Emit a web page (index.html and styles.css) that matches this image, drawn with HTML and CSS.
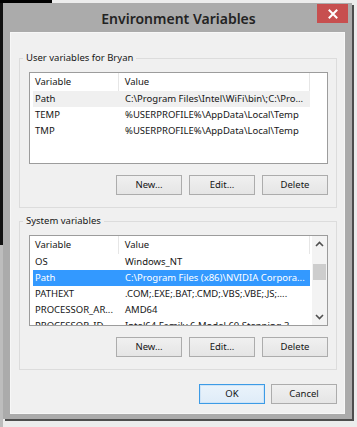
FILE: index.html
```html
<!DOCTYPE html>
<html>
<head>
<meta charset="utf-8">
<link rel="stylesheet" href="styles.css">
</head>
<body>
<div class="window">
  <div class="titlebar">
    <span class="title">Environment Variables</span>
    <div class="close"><svg width="10" height="10" viewBox="0 0 10 10"><path d="M1.5 1.5 L8.5 8.5 M8.5 1.5 L1.5 8.5" stroke="#fff" stroke-width="2" stroke-linecap="square"/></svg></div>
  </div>
  <div class="client">
    <fieldset class="group">
      <legend>User variables for Bryan</legend>
      <div class="list">
        <div class="cols">
          <div class="head">
            <div class="hc c1">Variable</div>
            <div class="hc c2">Value</div>
          </div>
          <div class="row hover"><div class="cell c1">Path</div><div class="cell c2">C:\Program Files\Intel\WiFi\bin\;C:\Pro...</div></div>
          <div class="row"><div class="cell c1">TEMP</div><div class="cell c2">%USERPROFILE%\AppData\Local\Temp</div></div>
          <div class="row"><div class="cell c1">TMP</div><div class="cell c2">%USERPROFILE%\AppData\Local\Temp</div></div>
        </div>
      </div>
      <div class="btnrow">
        <div class="btn">New...</div>
        <div class="btn">Edit...</div>
        <div class="btn">Delete</div>
      </div>
    </fieldset>
    <fieldset class="group second">
      <legend>System variables</legend>
      <div class="list">
        <div class="cols">
          <div class="head">
            <div class="hc c1">Variable</div>
            <div class="hc c2">Value</div>
          </div>
          <div class="row"><div class="cell c1">OS</div><div class="cell c2">Windows_NT</div></div>
          <div class="row selected"><div class="cell c1">Path</div><div class="cell c2">C:\Program Files (x86)\NVIDIA Corpora...</div></div>
          <div class="row"><div class="cell c1">PATHEXT</div><div class="cell c2">.COM;.EXE;.BAT;.CMD;.VBS;.VBE;.JS;....</div></div>
          <div class="row"><div class="cell c1">PROCESSOR_AR...</div><div class="cell c2">AMD64</div></div>
          <div class="row"><div class="cell c1">PROCESSOR_ID...</div><div class="cell c2">Intel64 Family 6 Model 60 Stepping 3, ...</div></div>
        </div>
        <div class="scrollbar">
          <div class="arrow"><svg width="9" height="6" viewBox="0 0 9 6"><path d="M1 5 L4.5 1.5 L8 5" fill="none" stroke="#505050" stroke-width="1.6"/></svg></div>
          <div class="track"><div class="thumb"></div></div>
          <div class="arrow"><svg width="9" height="6" viewBox="0 0 9 6"><path d="M1 1 L4.5 4.5 L8 1" fill="none" stroke="#505050" stroke-width="1.6"/></svg></div>
        </div>
      </div>
      <div class="btnrow">
        <div class="btn">New...</div>
        <div class="btn">Edit...</div>
        <div class="btn">Delete</div>
      </div>
    </fieldset>
    <div class="btnrow dialog">
      <div class="btn default">OK</div>
      <div class="btn">Cancel</div>
    </div>
  </div>
</div>
</body>
</html>
```
FILE: styles.css
```css
html, body {
  margin: 0;
  padding: 0;
}
body {
  width: 357px;
  height: 427px;
  overflow: hidden;
  font-family: "Noto Sans", "Open Sans", sans-serif;
  font-size: 9.5px;
  color: #161616;
  background:
    linear-gradient(#000, #000) 0 0 / 52px 3px no-repeat,
    linear-gradient(#111, #111) 0 0 / 3px 245px no-repeat,
    linear-gradient(#bdbdbd, #bdbdbd) 0 245px / 3px 182px no-repeat,
    #ececec;
}
.window {
  margin: 3px 0 0 3px;
  width: 349px;
  background: #ababab;
  box-shadow: 2px 2px 0 #4d4d4d;
  padding: 0 7px 5px 7px;
  box-sizing: border-box;
}
.titlebar {
  height: 29px;
  position: relative;
  display: flex;
  align-items: center;
  justify-content: center;
}
.title {
  font-size: 14px;
  font-weight: 600;
  color: #232323;
  margin-left: 2px;
  margin-top: 1px;
}
.close {
  position: absolute;
  right: -3px;
  top: 1px;
  width: 31px;
  height: 19px;
  background: #c74f4f;
  display: flex;
  align-items: center;
  justify-content: center;
}
.client {
  background: #f0f0f0;
  padding: 19px 8px 10px 9px;
  box-shadow: inset 0 0 0 1px #f7f7f7;
}
.group {
  margin: 0;
  border: 1px solid #dcdcdc;
  padding: 7px 8px 12px 9px;
  min-width: 0;
}
.group.second {
  margin-top: 6px;
}
legend {
  padding: 0 3px;
  margin-left: -6px;
  line-height: 14px;
  font-size: 9.5px;
}
.list {
  height: 92px;
  border: 1px solid #9c9c9c;
  background: #fff;
  box-sizing: border-box;
  display: flex;
  overflow: hidden;
}
.second .list {
  height: 91px;
}
.cols {
  flex: 1;
  overflow: hidden;
}
.head {
  display: flex;
  height: 18px;
  align-items: center;
  width: 280px;
}
.hc {
  height: 18px;
  line-height: 18px;
  box-sizing: border-box;
  border-right: 1px solid #e6e6e6;
  white-space: nowrap;
}
.hc.c1 {
  width: 89px;
  padding-left: 5px;
}
.hc.c2 {
  width: 192px;
  padding-left: 6px;
}
.row {
  display: flex;
  height: 16px;
  line-height: 16px;
  margin-left: 3px;
  width: 277px;
  white-space: nowrap;
}
.row.hover {
  background: #f0f0f0;
}
.row.selected {
  background: #3399ff;
  color: #fff;
}
.cell {
  overflow: hidden;
}
.cell.c1 {
  width: 86px;
  padding-left: 2px;
  box-sizing: border-box;
}
.cell.c2 {
  width: 191px;
  padding-left: 6px;
  box-sizing: border-box;
}
.scrollbar {
  width: 15px;
  background: #f3f3f3;
  display: flex;
  flex-direction: column;
}
.arrow {
  height: 16px;
  display: flex;
  align-items: center;
  justify-content: center;
}
.track {
  flex: 1;
  padding-top: 12px;
}
.thumb {
  height: 16px;
  margin: 0 1px 0 1px;
  background: #cdcdcd;
}
.btnrow {
  display: flex;
  justify-content: flex-end;
  gap: 7px;
  margin-top: 11px;
}
.btn {
  width: 66px;
  height: 20px;
  box-sizing: border-box;
  border: 1px solid #acacac;
  background: linear-gradient(#f0f0f0, #e5e5e5);
  text-align: center;
  line-height: 18px;
  font-size: 9.5px;
  color: #151515;
}
.btnrow.dialog {
  margin-top: 14px;
  gap: 6px;
}
.btn.default {
  border-color: #3c9be6;
  background: linear-gradient(#eaf3fb, #dfecf8);
  box-shadow: inset 0 0 0 1px #cfe4f7;
}
```
